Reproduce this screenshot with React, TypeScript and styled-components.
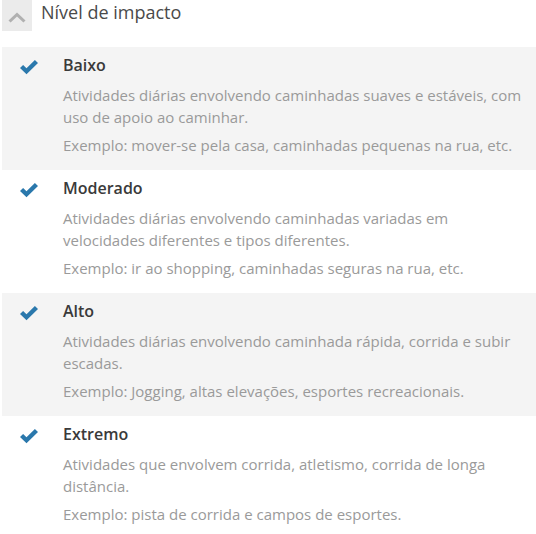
import React from "react";
import styled, { createGlobalStyle } from "styled-components";

const Global = createGlobalStyle`
  html, body { margin: 0; padding: 0; background: #fff; }
  body { font-family: "Open Sans", "Noto Sans", sans-serif; }
`;

const Page = styled.div`
  width: 536px;
  height: 534px;
  overflow: hidden;
  background: #fff;
`;

const Header = styled.div`
  display: flex;
  align-items: flex-start;
  gap: 9px;
  height: 31px;
  padding-left: 2px;
  margin-bottom: 16px;
`;

const CollapseBtn = styled.div`
  width: 30px;
  height: 31px;
  background: #ebebeb;
  display: flex;
  align-items: center;
  justify-content: center;
  padding-top: 3px;
  box-sizing: border-box;
`;

const HeaderTitle = styled.div`
  font-size: 18px;
  color: #4a4a4a;
  line-height: 24px;
`;

const List = styled.div`
  display: flex;
  flex-direction: column;
  padding-left: 2px;
`;

const Item = styled.div<{ $shaded: boolean }>`
  display: grid;
  grid-template-columns: 61px 1fr;
  background: ${(p) => (p.$shaded ? "#f4f4f4" : "#fff")};
  height: 123px;
  box-sizing: border-box;
  padding-top: 7px;
`;

const CheckCell = styled.div`
  display: flex;
  justify-content: flex-start;
  padding-left: 17px;
  padding-top: 5px;
`;

const Body = styled.div`
  display: flex;
  flex-direction: column;
`;

const Title = styled.div`
  font-size: 16px;
  font-weight: 600;
  color: #3a3a3a;
  line-height: 22px;
  margin-bottom: 8px;
`;

const Desc = styled.div`
  font-size: 15px;
  color: #9a9a9a;
  line-height: 22px;
  padding-right: 8px;
`;

const Example = styled(Desc)`
  margin-top: 6px;
`;

const Check = () => (
  <svg width="20" height="16" viewBox="0 0 20 16">
    <path d="M1 9 L4.1 6 L7.5 9.3 L15.9 1 L19 4 L7.5 15.3 Z" fill="#2a78ac" />
  </svg>
);

const Chevron = () => (
  <svg width="18" height="11" viewBox="0 0 18 11">
    <path d="M0.5 8.6 L9 0.6 L17.5 8.6 L15.4 10.6 L9 4.6 L2.6 10.6 Z" fill="#b0b0b0" />
  </svg>
);

const items = [
  {
    title: "Baixo",
    desc: "Atividades diárias envolvendo caminhadas suaves e estáveis, com uso de apoio ao caminhar.",
    ex: "Exemplo: mover-se pela casa, caminhadas pequenas na rua, etc.",
  },
  {
    title: "Moderado",
    desc: "Atividades diárias envolvendo caminhadas variadas em velocidades diferentes e tipos diferentes.",
    ex: "Exemplo: ir ao shopping, caminhadas seguras na rua, etc.",
  },
  {
    title: "Alto",
    desc: "Atividades diárias envolvendo caminhada rápida, corrida e subir escadas.",
    ex: "Exemplo: Jogging, altas elevações, esportes recreacionais.",
  },
  {
    title: "Extremo",
    desc: "Atividades que envolvem corrida, atletismo, corrida de longa distância.",
    ex: "Exemplo: pista de corrida e campos de esportes.",
  },
];

export default function App() {
  return (
    <Page>
      <Global />
      <Header>
        <CollapseBtn>
          <Chevron />
        </CollapseBtn>
        <HeaderTitle>Nível de impacto</HeaderTitle>
      </Header>
      <List>
        {items.map((it, i) => (
          <Item key={it.title} $shaded={i % 2 === 0}>
            <CheckCell>
              <Check />
            </CheckCell>
            <Body>
              <Title>{it.title}</Title>
              <Desc>{it.desc}</Desc>
              <Example>{it.ex}</Example>
            </Body>
          </Item>
        ))}
      </List>
    </Page>
  );
}
